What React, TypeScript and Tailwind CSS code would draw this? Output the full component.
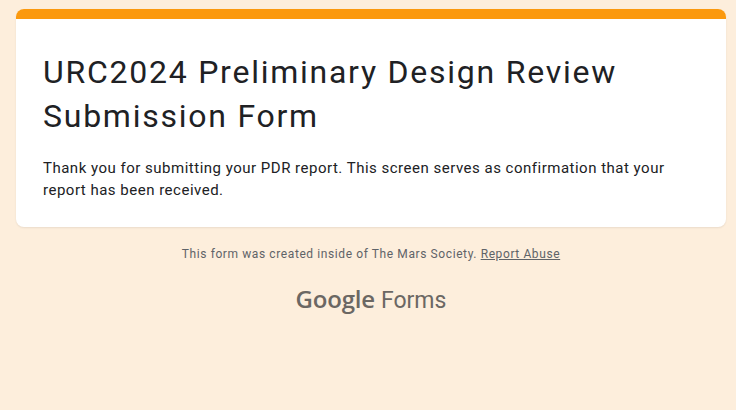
export default function App() {
  return (
    <div
      className="min-h-[410px] w-full bg-[#fdeedc] pt-[9px] pb-10"
      style={{ fontFamily: 'Roboto, "Liberation Sans", sans-serif' }}
    >
      <div className="ml-[16px] w-[710px]">
        {/* Confirmation card */}
        <div className="overflow-hidden rounded-lg bg-white shadow-[0_1px_2px_rgba(0,0,0,0.08)]">
          <div className="h-[10px] bg-[#fb990e]" />
          <div className="pl-[27px] pr-6 pt-[31px] pb-[26px]">
            <h1 className="text-[32px] leading-[44px] font-normal text-[#202124] tracking-[1.75px]">
              URC2024 Preliminary Design Review Submission Form
            </h1>
            <p className="mt-[19px] text-[15px] leading-[22px] text-[#202124] tracking-[0.5px]">
              Thank you for submitting your PDR report. This screen serves as confirmation that your report has been received.
            </p>
          </div>
        </div>

        {/* Footer */}
        <div className="mt-[19px] flex flex-col items-center">
          <p className="text-[12px] leading-[16px] text-[#5f6368] tracking-[0.6px]">
            This form was created inside of The Mars Society.{' '}
            <span className="underline">Report Abuse</span>
          </p>
          <div className="mt-[19px] flex items-baseline text-[#6b6763]">
            <span
              className="text-[24px] font-semibold tracking-[-0.2px]"
              style={{ fontFamily: '"Open Sans", Roboto, sans-serif' }}
            >
              Google
            </span>
            <span className="ml-[6px] text-[23px]">Forms</span>
          </div>
        </div>
      </div>
    </div>
  );
}
